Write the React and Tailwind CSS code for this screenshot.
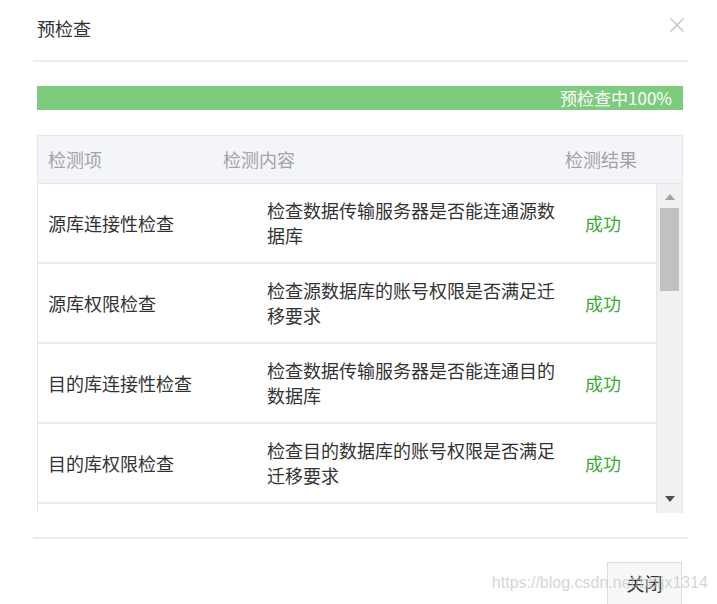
import React from "react";

const rows = [
  ["源库连接性检查", "检查数据传输服务器是否能连通源数据库"],
  ["源库权限检查", "检查源数据库的账号权限是否满足迁移要求"],
  ["目的库连接性检查", "检查数据传输服务器是否能连通目的数据库"],
  ["目的库权限检查", "检查目的数据库的账号权限是否满足迁移要求"],
];

export default function App() {
  return (
    <div
      className="relative w-[717px] h-[604px] overflow-hidden bg-white text-[#333]"
      style={{ fontFamily: '"Noto Sans CJK SC", "Noto Sans", sans-serif' }}
    >
      {/* header */}
      <div className="flex h-[60px] items-start justify-between pl-[37px] pr-[32px] pt-[14px]">
        <div className="text-[18px] leading-[28px] text-[#333]">预检查</div>
        <svg width="16" height="16" viewBox="0 0 16 16" className="mt-[3px]">
          <path d="M1.5 1.5 L14.5 14.5 M14.5 1.5 L1.5 14.5" stroke="#c8c8c8" strokeWidth="1.6" />
        </svg>
      </div>
      <div className="ml-[33px] mr-[29px] h-[2px] bg-[#ececec]" />

      {/* progress */}
      <div className="ml-[37px] mt-[24px] flex h-[24px] w-[646px] items-center justify-end bg-[#7dcb7c] pr-[11px]">
        <span className="text-[17px] leading-[24px] text-white">预检查中100%</span>
      </div>

      {/* table */}
      <div className="ml-[37px] mt-[25px] w-[646px] border-l border-r border-t border-[#e3e6ee]">
        <div className="flex h-[48px] items-center border-b border-[#e3e6ee] bg-[#f4f5f9] text-[18px] text-[#a3a3a3]">
          <div className="w-[174px] pl-[10px]">检测项</div>
          <div className="w-[343px] pl-[11px]">检测内容</div>
          <div className="flex-1 pl-[10px]">检测结果</div>
        </div>
        <div className="flex h-[329px] overflow-hidden">
          <div className="w-[619px] border-r border-[#e3e6ee]">
            {rows.map(([a, b], i) => (
              <div key={i} className="flex h-[80px] items-center border-b-2 border-[#e8ebf1]">
                <div className="w-[218px] shrink-0 pl-[10px] text-[18px]">{a}</div>
                <div className="w-[308px] shrink-0 pl-[11px] pr-[2px] text-[18px] leading-[25px]">{b}</div>
                <div className="flex-1 pl-[21px] text-[18px] text-[#3aac2f]">成功</div>
              </div>
            ))}
          </div>
          <div className="relative flex flex-1 flex-col items-center bg-[#f1f1f1]">
            <svg width="10" height="6" viewBox="0 0 10 6" className="mt-[10px]">
              <path d="M0 6 L5 0 L10 6 Z" fill="#a3a3a3" />
            </svg>
            <div className="mt-[8px] h-[83px] w-[19px] bg-[#c1c1c1]" />
            <div className="flex-1" />
            <svg width="10" height="6" viewBox="0 0 10 6" className="mb-[11px]">
              <path d="M0 0 L10 0 L5 6 Z" fill="#505050" />
            </svg>
          </div>
        </div>
      </div>

      {/* footer */}
      <div className="ml-[33px] mr-[29px] mt-[24px] h-[2px] bg-[#ececec]" />
      <div className="flex justify-end pr-[35px] pt-[23px]">
        <div className="flex h-[48px] w-[75px] items-start justify-center border border-[#dcdcdc] bg-[#f7f7f7] pt-[7px] text-[18px] text-[#333]">
          关闭
        </div>
      </div>

      {/* watermark */}
      <div
        className="absolute right-[9px] top-[571px] text-[16px] leading-[24px] text-[rgba(195,195,195,0.7)]"
        style={{ fontFamily: '"Liberation Sans", Arial, sans-serif' }}
      >
        https://blog.csdn.net/bbljx1314
      </div>
    </div>
  );
}
